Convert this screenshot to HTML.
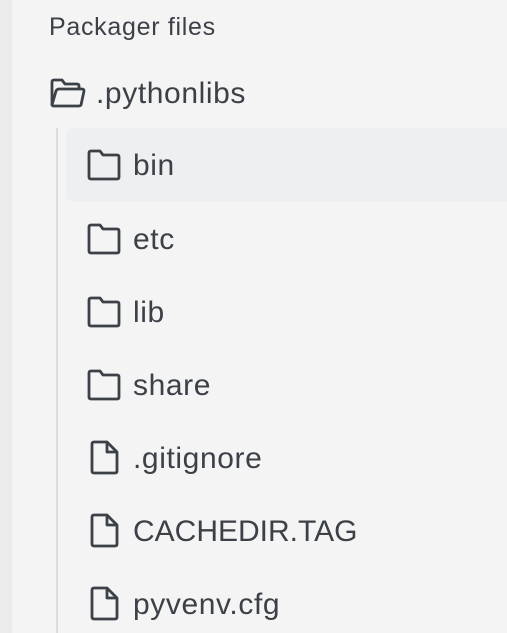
<!DOCTYPE html>
<html><head><style>
body{margin:0;width:507px;height:633px;background:#f4f4f4;position:relative;overflow:hidden;font-family:"Liberation Sans",sans-serif;color:#3c4047}
.strip{position:absolute;left:0;top:0;width:12px;height:633px;background:#ebebec}
.vl{position:absolute;left:56px;top:128px;width:2px;height:505px;background:#dcdcdc}
.hl{position:absolute;left:66px;top:128px;width:460px;height:74px;background:#eeeff0;border-radius:8px}
.t{position:absolute;white-space:nowrap;font-size:30px;letter-spacing:0.6px}
svg{position:absolute}
</style></head><body>
<div class="strip"></div>
<div class="vl"></div>
<div class="hl"></div>
<div class="t" style="left:49px;top:13px;font-size:25px;letter-spacing:0.7px">Packager files</div>
<svg style="left:50px;top:77px" width="36" height="32" viewBox="0 0 36 32" fill="none" stroke="#3c4047" stroke-width="2.8" stroke-linejoin="round"><path d="M2 28V5q0-2 2-2h8l3 4h12q2 0 2 2v3"/><path d="M2 28l4-14q1-2 3-2h23q2 0 2 2l-3 14q-1 1-2 1H3z"/></svg>
<div class="t" style="left:96px;top:77px">.pythonlibs</div>

<svg style="left:87px;top:149px" width="35" height="32" viewBox="0 0 35 32" fill="none" stroke="#3c4047" stroke-width="2.8" stroke-linejoin="round"><path d="M2 4q0-2 2-2h9l3 4h14q2 0 2 2v20q0 2-2 2H4q-2 0-2-2z"/></svg>
<div class="t" style="left:133px;top:149px">bin</div>
<svg style="left:87px;top:223px" width="35" height="32" viewBox="0 0 35 32" fill="none" stroke="#3c4047" stroke-width="2.8" stroke-linejoin="round"><path d="M2 4q0-2 2-2h9l3 4h14q2 0 2 2v20q0 2-2 2H4q-2 0-2-2z"/></svg>
<div class="t" style="left:133px;top:223px">etc</div>
<svg style="left:87px;top:296px" width="35" height="32" viewBox="0 0 35 32" fill="none" stroke="#3c4047" stroke-width="2.8" stroke-linejoin="round"><path d="M2 4q0-2 2-2h9l3 4h14q2 0 2 2v20q0 2-2 2H4q-2 0-2-2z"/></svg>
<div class="t" style="left:133px;top:296px">lib</div>
<svg style="left:87px;top:369px" width="35" height="32" viewBox="0 0 35 32" fill="none" stroke="#3c4047" stroke-width="2.8" stroke-linejoin="round"><path d="M2 4q0-2 2-2h9l3 4h14q2 0 2 2v20q0 2-2 2H4q-2 0-2-2z"/></svg>
<div class="t" style="left:133px;top:369px">share</div>

<svg style="left:90px;top:440px" width="30" height="35" viewBox="0 0 30 35" fill="none" stroke="#3c4047" stroke-width="2.8" stroke-linejoin="round"><path d="M2 4q0-2 2-2h13l10 10v19q0 2-2 2H4q-2 0-2-2z"/><path d="M17 2v10h10"/></svg>
<div class="t" style="left:133px;top:442px">.gitignore</div>
<svg style="left:90px;top:513px" width="30" height="35" viewBox="0 0 30 35" fill="none" stroke="#3c4047" stroke-width="2.8" stroke-linejoin="round"><path d="M2 4q0-2 2-2h13l10 10v19q0 2-2 2H4q-2 0-2-2z"/><path d="M17 2v10h10"/></svg>
<div class="t" style="left:133px;top:515px;letter-spacing:0">CACHEDIR.TAG</div>
<svg style="left:90px;top:586px" width="30" height="35" viewBox="0 0 30 35" fill="none" stroke="#3c4047" stroke-width="2.8" stroke-linejoin="round"><path d="M2 4q0-2 2-2h13l10 10v19q0 2-2 2H4q-2 0-2-2z"/><path d="M17 2v10h10"/></svg>
<div class="t" style="left:133px;top:588px">pyvenv.cfg</div>
</body></html>
